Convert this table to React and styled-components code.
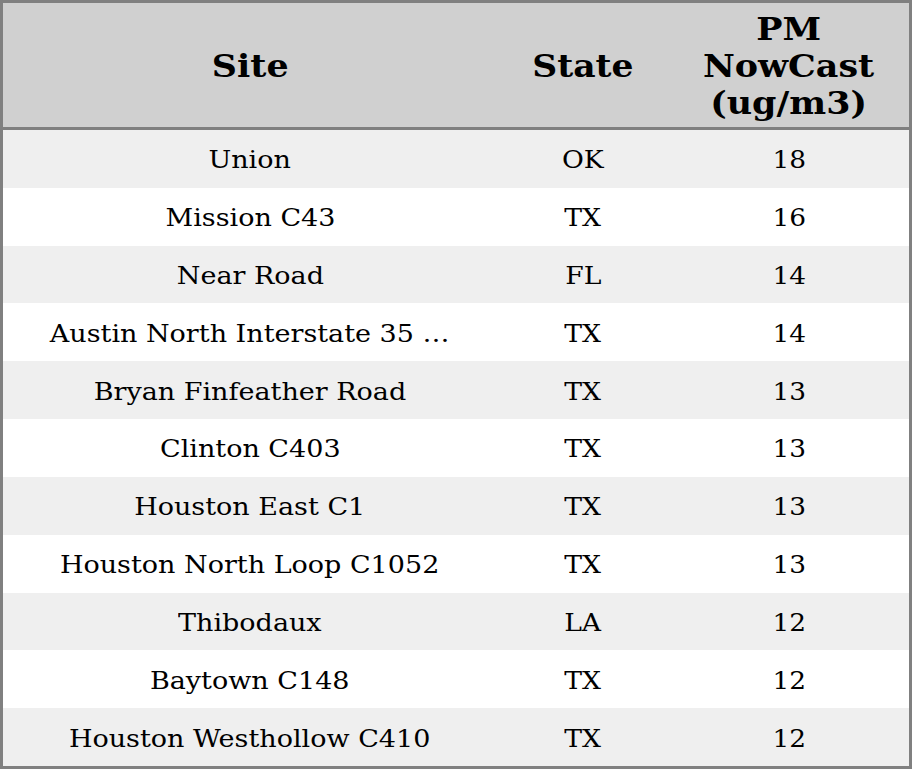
import React from 'react';
import styled, { createGlobalStyle } from 'styled-components';

const GlobalStyle = createGlobalStyle`
  html, body {
    margin: 0;
    padding: 0;
    background: #ffffff;
  }
`;

const Table = styled.div`
  box-sizing: border-box;
  width: 912px;
  height: 769px;
  border: 3px solid #808080;
  display: grid;
  grid-template-columns: 494px 172px 240px;
  grid-template-rows: 127px repeat(11, 1fr);
  font-family: "DejaVu Serif", serif;
  color: #000;
`;

const HeadCell = styled.div`
  background: #d0d0d0;
  border-bottom: 3px solid #808080;
  display: flex;
  align-items: center;
  justify-content: center;
  text-align: center;
  font-weight: bold;
  font-size: 32px;
  line-height: 37px;
  padding-top: 2px;
`;

const Cell = styled.div`
  background: ${p => (p.$odd ? '#efefef' : '#ffffff')};
  display: flex;
  align-items: center;
  justify-content: center;
  font-size: 24px;
  white-space: nowrap;
  overflow: hidden;
  padding-top: 3px;
`;

// glyphs in the source are drawn a little wide
const Wide = styled.span`
  display: inline-block;
  transform: scaleX(${p => p.$x});
`;

const rows = [
  ['Union', 'OK', 18],
  ['Mission C43', 'TX', 16],
  ['Near Road', 'FL', 14],
  ['Austin North Interstate 35 …', 'TX', 14],
  ['Bryan Finfeather Road', 'TX', 13],
  ['Clinton C403', 'TX', 13],
  ['Houston East C1', 'TX', 13],
  ['Houston North Loop C1052', 'TX', 13],
  ['Thibodaux', 'LA', 12],
  ['Baytown C148', 'TX', 12],
  ['Houston Westhollow C410', 'TX', 12],
];

const App = () => (
  <>
    <GlobalStyle />
    <Table>
      <HeadCell><Wide $x={1.09}>Site</Wide></HeadCell>
      <HeadCell><Wide $x={1.08}>State</Wide></HeadCell>
      <HeadCell><Wide $x={1.09}>PM<br />NowCast<br />(ug/m3)</Wide></HeadCell>
      {rows.map(([site, state, pm], i) => (
        <React.Fragment key={site}>
          <Cell $odd={i % 2 === 0}><Wide $x={1.125}>{site}</Wide></Cell>
          <Cell $odd={i % 2 === 0}><Wide $x={1.11}>{state}</Wide></Cell>
          <Cell $odd={i % 2 === 0}><Wide $x={1.1}>{pm}</Wide></Cell>
        </React.Fragment>
      ))}
    </Table>
  </>
);

export default App;
